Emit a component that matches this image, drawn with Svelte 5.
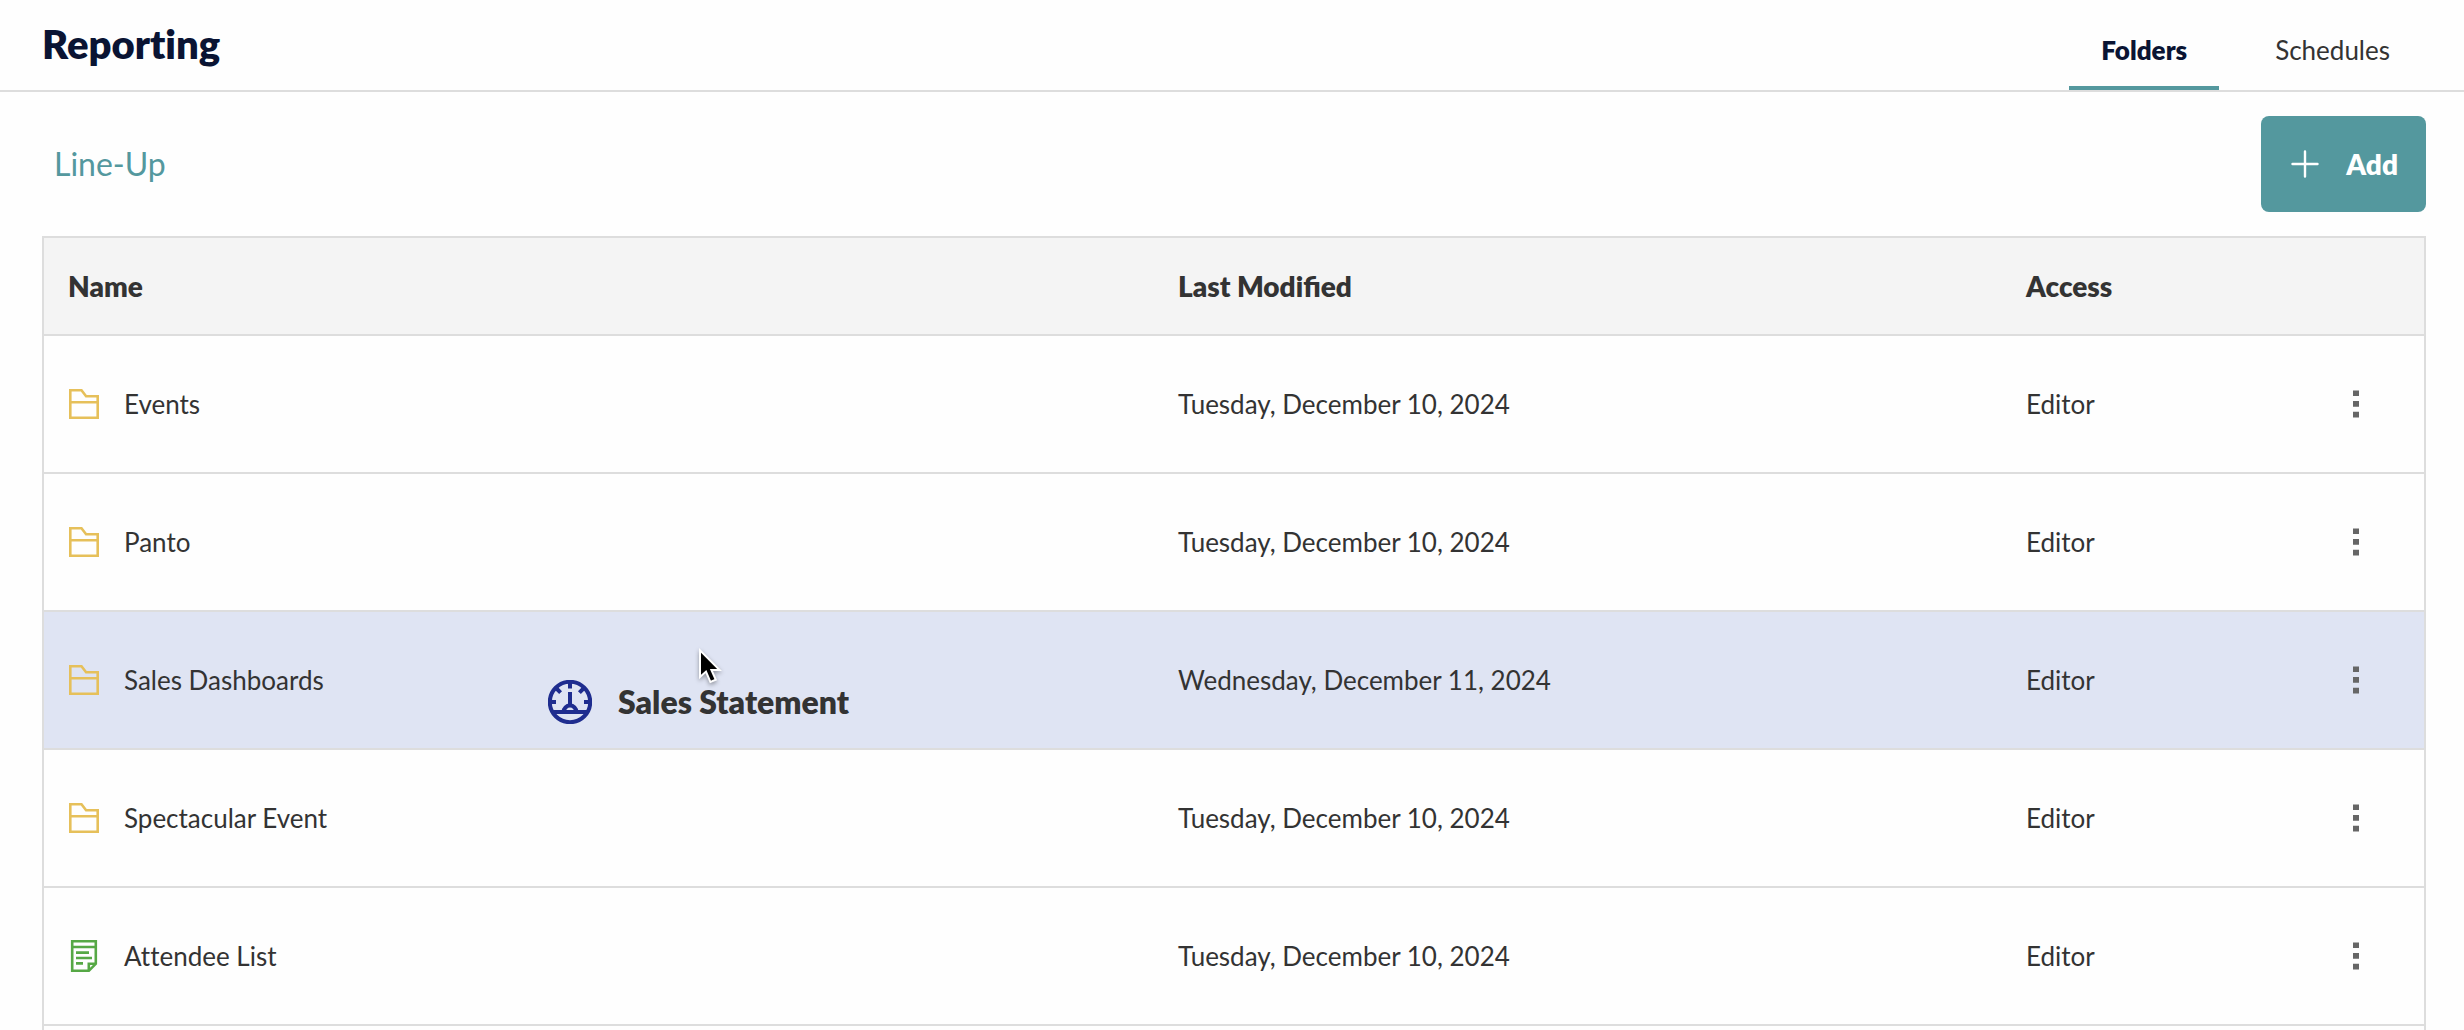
<script lang="ts">
  type Kind = 'folder' | 'report';

  interface Item {
    name: string;
    kind: Kind;
    modified: string;
    access: string;
  }

  const tabs = ['Folders', 'Schedules'];

  const items: Item[] = [
    { name: 'Events', kind: 'folder', modified: 'Tuesday, December 10, 2024', access: 'Editor' },
    { name: 'Panto', kind: 'folder', modified: 'Tuesday, December 10, 2024', access: 'Editor' },
    { name: 'Sales Dashboards', kind: 'folder', modified: 'Wednesday, December 11, 2024', access: 'Editor' },
    { name: 'Spectacular Event', kind: 'folder', modified: 'Tuesday, December 10, 2024', access: 'Editor' },
    { name: 'Attendee List', kind: 'report', modified: 'Tuesday, December 10, 2024', access: 'Editor' },
  ];

  let activeTab = $state('Folders');
  let dropTarget = $state('Sales Dashboards');
  let dragged = $state({ name: 'Sales Statement', x: 548, y: 648 });
</script>

<div class="page">
  <header class="header">
    <h1 class="header__title">Reporting</h1>
    <nav class="tabs">
      {#each tabs as tab}
        <button
          class="tabs__item"
          class:tabs__item--active={tab === activeTab}
          onclick={() => (activeTab = tab)}
        >
          {tab}
        </button>
      {/each}
    </nav>
  </header>

  <main class="content">
    <div class="toolbar">
      <a class="toolbar__crumb" href="#line-up">Line-Up</a>
      <button class="add">
        <svg class="add__icon" viewBox="0 0 28 28" aria-hidden="true">
          <path d="M14 1.5v25M1.5 14h25" />
        </svg>
        Add
      </button>
    </div>

    <div class="listing">
      <table class="table">
        <colgroup>
          <col />
          <col class="col-modified" />
          <col class="col-access" />
          <col class="col-menu" />
        </colgroup>
        <thead>
          <tr>
            <th>Name</th>
            <th>Last Modified</th>
            <th>Access</th>
            <th></th>
          </tr>
        </thead>
        <tbody>
          {#each items as item}
            <tr class:drop-target={item.name === dropTarget}>
              <td>
                <div class="name">
                  {#if item.kind === 'folder'}
                    <svg class="name__icon name__icon--folder" viewBox="0 0 32 32" aria-hidden="true">
                      <path d="M2.3 29.7V2.3h11.2l4.6 6h11.6v21.4zM2.3 14.3h27.4" />
                    </svg>
                  {:else}
                    <svg class="name__icon name__icon--report" viewBox="0 0 32 32" aria-hidden="true">
                      <path d="M4.2 1.2h23.6v22.6l-7 7H4.2zM4.2 7h23.6M20.8 30.8v-7h7" />
                      <path d="M8 12.6h13M8 18h16M8 23.4h7" />
                    </svg>
                  {/if}
                  {item.name}
                </div>
              </td>
              <td>{item.modified}</td>
              <td>{item.access}</td>
              <td class="menu-cell">
                <button class="menu" aria-label="Options for {item.name}">
                  <svg class="menu__icon" viewBox="0 0 8 28" aria-hidden="true">
                    <path d="M1 .5h6v5.6H1zM1 11.1h6v5.6H1zM1 21.8h6v5.6H1z" />
                  </svg>
                </button>
              </td>
            </tr>
          {/each}
        </tbody>
      </table>
    </div>
  </main>

  
  <div class="drag" style="left: {dragged.x}px; top: {dragged.y}px">
    <svg class="drag__pointer" viewBox="0 0 24 38" aria-hidden="true">
      <path d="M2 2.4v26.6l6-5.4 4.4 10.4 5.4-2.200-4.400-9.800h8.200z" />
    </svg>
    <svg class="drag__icon" viewBox="0 0 44 44" aria-hidden="true">
      <circle cx="22" cy="22" r="20.2" />
      <path d="M22 2v6.5M2 22h6M36 22h6M8 8l4.6 4.6M36 8l-4.600 4.600M22 12v14M5 32h34" />
      <path d="M15.6 32a6.4 6.4 0 0 1 12.8 0" />
    </svg>
    {dragged.name}
  </div>
</div>

<style>
  :global(body) {
    margin: 0;
    background: #fefefe;
  }

  .page {
    display: flex;
    flex-direction: column;
    height: 100vh;
    overflow: hidden;
    font-family: Lato, 'Liberation Sans', sans-serif;
    font-size: 26px;
    font-variant-ligatures: no-common-ligatures;
    line-height: 32px;
    color: #333;
  }

  button {
    border: none;
    background: none;
    font: inherit;
    font-variant-ligatures: inherit;
    color: inherit;
    cursor: pointer;
  }

  .header {
    display: flex;
    justify-content: space-between;
    flex-shrink: 0;
    padding: 0 42px;
    border-bottom: 2px solid #ddd;
  }

  .header__title {
    margin: 0;
    padding: 20px 0 22px;
    font-size: 40px;
    font-weight: 800;
    line-height: 48px;
    color: #0a1433;
  }

  .tabs {
    display: flex;
    gap: 24px;
  }

  .tabs__item {
    padding: 14px 32px 0;
    border-bottom: 4px solid transparent;
  }

  .tabs__item--active {
    border-bottom-color: #54989e;
    font-weight: 800;
    color: #0a1433;
  }

  .content {
    display: flex;
    flex: 1;
    flex-direction: column;
    min-height: 0;
    padding: 0 38px 0 42px;
  }

  .toolbar {
    display: flex;
    align-items: center;
    justify-content: space-between;
    padding: 24px 0 24px 12px;
  }

  .toolbar__crumb {
    font-size: 32px;
    line-height: 40px;
    color: #54989e;
    text-decoration: none;
  }

  .add {
    display: flex;
    align-items: center;
    gap: 27px;
    height: 96px;
    padding: 0 28px 0 30px;
    border-radius: 8px;
    background: #54989e;
    font-size: 28px;
    font-weight: 800;
    color: #fff;
  }

  .add__icon {
    width: 28px;
    height: 28px;
    fill: none;
    stroke: currentColor;
    stroke-width: 2.4;
    stroke-linecap: round;
  }

  .listing {
    flex: 1;
    min-height: 0;
    border: 2px solid #ddd;
    border-bottom: none;
  }

  .table {
    width: 100%;
    border-collapse: separate;
    border-spacing: 0;
    table-layout: fixed;
  }

  .col-modified {
    width: 848px;
  }

  .col-access {
    width: 286px;
  }

  .col-menu {
    width: 136px;
  }

  th,
  td {
    padding: 0 24px;
    border-bottom: 2px solid #ddd;
    text-align: left;
  }

  th {
    height: 96px;
    background: #f4f4f4;
    font-size: 28px;
    font-variant-ligatures: normal;
    font-weight: 800;
  }

  td {
    height: 136px;
  }

  .drop-target td {
    background: #dfe4f3;
  }

  .name {
    display: flex;
    align-items: center;
    gap: 24px;
  }

  .name__icon {
    width: 32px;
    height: 32px;
    fill: none;
    stroke-width: 2.6;
  }

  .name__icon--folder {
    stroke: #e6c05a;
  }

  .name__icon--report {
    stroke: #56a845;
  }

  .menu-cell {
    text-align: center;
  }

  .menu {
    display: inline-flex;
    padding: 8px 20px;
    vertical-align: middle;
  }

  .menu__icon {
    width: 8px;
    height: 28px;
    fill: #666;
  }

  .drag {
    position: absolute;
    display: flex;
    align-items: center;
    gap: 26px;
    padding-top: 32px;
    font-size: 32px;
    font-weight: 800;
    line-height: 44px;
    white-space: nowrap;
    pointer-events: none;
  }

  .drag__icon {
    width: 44px;
    height: 44px;
    fill: none;
    stroke: #1f2d8f;
    stroke-width: 4;
  }

  .drag__pointer {
    position: absolute;
    top: 0;
    left: 150px;
    width: 24px;
    height: 38px;
    fill: #000;
    stroke: #fff;
    stroke-width: 2;
    filter: drop-shadow(0 2px 2px rgba(0, 0, 0, 0.35));
  }
</style>
